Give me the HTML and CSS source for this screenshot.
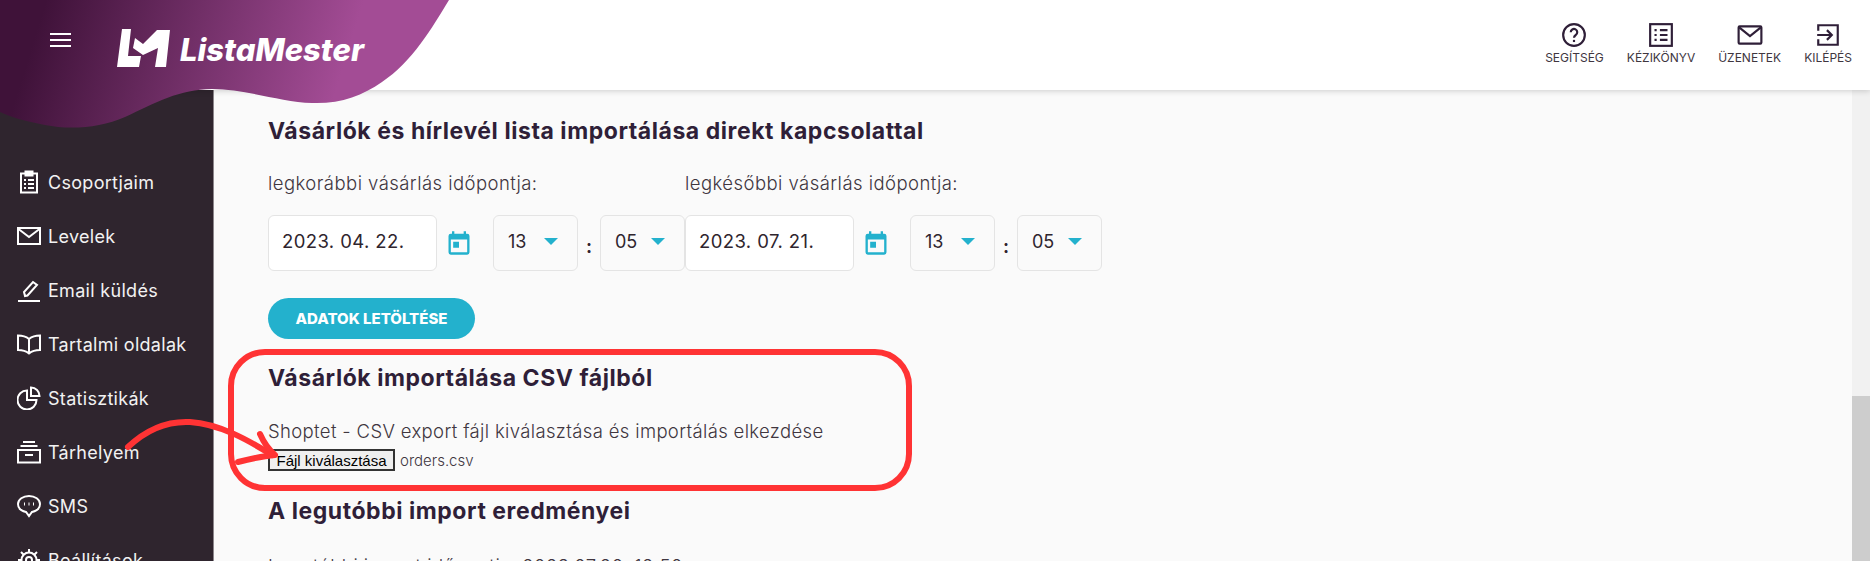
FILE: index.html
```html
<!DOCTYPE html>
<html lang="hu">
<head>
    <meta charset="UTF-8">
    <meta name="viewport" content="width=device-width, initial-scale=1.0">
    <title>ListaMester</title>
    <link rel="stylesheet" href="styles.css">
</head>
<body>

    <!-- Felső sáv -->
    <header class="topbar">
        <nav class="top-links">
            <a class="top-link">
                <svg width="26" height="26" viewBox="0 0 24 24" class="top-icon"><circle cx="12" cy="12" r="10"/><path d="M9 9.5a3 3 0 1 1 4.6 2.5c-1 .7-1.6 1.2-1.6 2.5"/><path d="M12 16.5v2"/></svg>
                <span>SEGÍTSÉG</span>
            </a>
            <a class="top-link">
                <svg width="26" height="26" viewBox="0 0 24 24" class="top-icon"><rect x="2" y="2" width="20" height="20"/><path d="M6 7.5h2M11 7.5h7M6 12h2M11 12h7M6 16.5h2M11 16.5h7"/></svg>
                <span>KÉZIKÖNYV</span>
            </a>
            <a class="top-link">
                <svg width="26" height="26" viewBox="0 0 24 24" class="top-icon"><rect x="1.5" y="4" width="21" height="16" rx="1"/><path d="M2 5l10 8 10-8"/></svg>
                <span>ÜZENETEK</span>
            </a>
            <a class="top-link">
                <svg width="26" height="26" viewBox="0 0 24 24" class="top-icon"><path d="M3 8V3h18v18H3v-5"/><path d="M2 12h13M11 7.5l4.5 4.5-4.5 4.5"/></svg>
                <span>KILÉPÉS</span>
            </a>
        </nav>
    </header>

    <div class="layout">
        <!-- Oldalsó menü -->
        <aside class="sidebar">
            <a class="side-item">
                <svg width="24" height="24" viewBox="0 0 24 24" class="side-icon"><rect x="4" y="3.5" width="16" height="19"/><rect x="8.5" y="1.5" width="7" height="4" fill="#fff"/><path d="M7 10h2M11 10h6M7 14h2M11 14h6M7 18h2M11 18h6"/></svg>
                <span>Csoportjaim</span>
            </a>
            <a class="side-item">
                <svg width="24" height="24" viewBox="0 0 24 24" class="side-icon"><rect x="1" y="4" width="22" height="16"/><path d="M1.5 5L12 13l10.5-8"/></svg>
                <span>Levelek</span>
            </a>
            <a class="side-item">
                <svg width="24" height="24" viewBox="0 0 24 24" class="side-icon"><path d="M1 23h22"/><path d="M8 18l-1-4L16 4l4 3-9.5 10.5z"/></svg>
                <span>Email küldés</span>
            </a>
            <a class="side-item">
                <svg width="24" height="24" viewBox="0 0 24 24" class="side-icon"><path d="M12 7C9 4.5 5 3.5 1 3.5V18c4 0 8 1 11 3.5 3-2.5 7-3.5 11-3.5V3.5C19 3.5 15 4.5 12 7zM12 7v14"/></svg>
                <span>Tartalmi oldalak</span>
            </a>
            <a class="side-item">
                <svg width="24" height="24" viewBox="0 0 24 24" class="side-icon"><path d="M10 4.5a9.5 9.5 0 1 0 9.5 9.5H10z"/><path d="M14 1.5V10h8.5A8.5 8.5 0 0 0 14 1.5z"/></svg>
                <span>Statisztikák</span>
            </a>
            <a class="side-item">
                <svg width="24" height="24" viewBox="0 0 24 24" class="side-icon"><path d="M6 2h12M3.5 6h17"/><rect x="1" y="10" width="22" height="12.5"/><path d="M8 15h8"/></svg>
                <span>Tárhelyem</span>
            </a>
            <a class="side-item">
                <svg width="24" height="24" viewBox="0 0 24 24" class="side-icon"><path d="M12 2C6 2 1 5.5 1 10s3.5 7 8 8l3 4 3-4c4.5-1 8-3.5 8-8s-5-8-11-8z"/><path d="M7 10h1M11.5 10h1M16 10h1" stroke-width="3"/></svg>
                <span>SMS</span>
            </a>
            <a class="side-item">
                <svg width="24" height="24" viewBox="0 0 24 24" class="side-icon"><circle cx="12" cy="12" r="7.5"/><circle cx="12" cy="12" r="3"/><path d="M12 1v3M12 20v3M1 12h3M20 12h3M4 4l2.5 2.5M17.5 17.5L20 20M20 4l-2.5 2.5M6.5 17.5L4 20"/></svg>
                <span>Beállítások</span>
            </a>
        </aside>

        <!-- Tartalom -->
        <main class="content">
            <h2 class="section-title first">Vásárlók és hírlevél lista importálása direkt kapcsolattal</h2>

            <div class="date-row">
                <div class="date-group">
                    <p class="date-label">legkorábbi vásárlás időpontja:</p>
                    <div class="date-fields">
                        <div class="date-input">2023. 04. 22.</div>
                        <svg width="28" height="28" viewBox="0 0 24 24" class="cal-icon"><path d="M19 4h-1V2h-2v2H8V2H6v2H5a2 2 0 0 0-2 2v14a2 2 0 0 0 2 2h14a2 2 0 0 0 2-2V6a2 2 0 0 0-2-2zm0 16H5V9h14zM7 11h5v5H7z"/></svg>
                        <div class="time-select"><span>13</span><i class="caret"></i></div>
                        <b class="colon">:</b>
                        <div class="time-select"><span>05</span><i class="caret"></i></div>
                    </div>
                </div>
                <div class="date-group">
                    <p class="date-label">legkésőbbi vásárlás időpontja:</p>
                    <div class="date-fields">
                        <div class="date-input">2023. 07. 21.</div>
                        <svg width="28" height="28" viewBox="0 0 24 24" class="cal-icon"><path d="M19 4h-1V2h-2v2H8V2H6v2H5a2 2 0 0 0-2 2v14a2 2 0 0 0 2 2h14a2 2 0 0 0 2-2V6a2 2 0 0 0-2-2zm0 16H5V9h14zM7 11h5v5H7z"/></svg>
                        <div class="time-select"><span>13</span><i class="caret"></i></div>
                        <b class="colon">:</b>
                        <div class="time-select"><span>05</span><i class="caret"></i></div>
                    </div>
                </div>
            </div>

            <button class="btn-download">ADATOK LETÖLTÉSE</button>

            <h2 class="section-title csv">Vásárlók importálása CSV fájlból</h2>
            <p class="csv-text">Shoptet - CSV export fájl kiválasztása és importálás elkezdése</p>
            <div class="file-row">
                <button class="file-btn">Fájl kiválasztása</button>
                <span class="file-name">orders.csv</span>
            </div>

            <h2 class="section-title last">A legutóbbi import eredményei</h2>
            <p class="last-text">Legutóbbi import időpontja: 2023.07.20. 12:50</p>
        </main>

        <div class="scrollbar"><div class="scroll-thumb"></div></div>
    </div>

    <!-- Logó a hullám alakú háttéren -->
    <div class="brand">
        <svg class="brand-wave" width="460" height="130" viewBox="0 0 460 130">
            <defs>
                <linearGradient id="waveGrad" x1="40" y1="20" x2="330" y2="110" gradientUnits="userSpaceOnUse">
                    <stop offset="0" stop-color="#3f1239"/>
                    <stop offset="1" stop-color="#a34c95"/>
                </linearGradient>
            </defs>
            <path d="M0 0H449C432 28 412 62 382 82C362 96 340 104 312 103C280 102 245 89 212 89C180 89 155 103 125 117C100 128 70 130 45 125C25 121 10 117 0 112Z" fill="url(#waveGrad)"/>
        </svg>
        <div class="burger"><i></i><i></i><i></i></div>
        <svg class="brand-logo" width="54" height="38" viewBox="0 0 54 38"><path d="M5 0h9l-3 27h13l-2 11H0zM18 9l8 6L40 1h13l-4 37H38l3-19-15 7-10-7z" fill="#fff"/></svg>
        <span class="brand-name">ListaMester</span>
    </div>

    <!-- Piros jelölés a képernyőképen -->
    <svg class="markup" width="1870" height="561" viewBox="0 0 1870 561">
        <rect x="231" y="352" width="678" height="136" rx="34" fill="none" stroke="#ff3334" stroke-width="6"/>
        <path d="M128 447C148 428 170 421 190 422C220 424 248 440 272 455" fill="none" stroke="#ff3334" stroke-width="6" stroke-linecap="round"/>
        <path d="M260 434C264 443 268 449 275 455C263 456 250 459 238 462" fill="none" stroke="#ff3334" stroke-width="6" stroke-linecap="round" stroke-linejoin="round"/>
    </svg>

</body>
</html>
```

FILE: styles.css
```css
* {
    box-sizing: border-box;
}

html, body {
    height: 561px;
    overflow: hidden;
}

body {
    margin: 0;
    font-family: Inter, Arial, sans-serif;
    background-color: #fafafa;
    color: #2f252e;
}

.topbar {
    height: 90px;
    background-color: #fff;
    box-shadow: 0 1px 6px rgba(0, 0, 0, 0.18);
    display: flex;
    justify-content: flex-end;
    position: relative;
    z-index: 2;
}

.top-links {
    display: flex;
    padding-top: 22px;
    padding-right: 18px;
    gap: 23px;
}

.top-link {
    display: flex;
    flex-direction: column;
    align-items: center;
    font-size: 12px;
    line-height: 16px;
    color: #40363f;
}

.top-icon {
    fill: none;
    stroke: #2f1f38;
    stroke-width: 2;
    margin-bottom: 2px;
}

.layout {
    display: flex;
    height: 471px;
}

.sidebar {
    width: 214px;
    background-color: #2f252e;
    border-right: 1px solid #8c868b;
    padding-top: 65px;
    display: flex;
    flex-direction: column;
    flex-shrink: 0;
}

.side-item {
    display: flex;
    align-items: center;
    gap: 7px;
    height: 54px;
    padding-left: 17px;
    color: #f2f2f2;
    font-size: 18px;
    letter-spacing: 0.3px;
    flex-shrink: 0;
}

.side-icon {
    fill: none;
    stroke: #fff;
    stroke-width: 2;
    flex-shrink: 0;
}

.content {
    flex: 1;
    padding: 24px 0 0 54px;
    overflow: hidden;
}

.section-title {
    margin: 0;
    font-size: 23px;
    line-height: 34px;
    letter-spacing: 0.55px;
    font-weight: 700;
    color: #2f1f38;
    white-space: nowrap;
}

.date-row {
    display: flex;
    margin-top: 23px;
}

.date-group {
    width: 417px;
}

.date-label {
    margin: 0 0 20px;
    font-size: 18.5px;
    line-height: 24px;
    letter-spacing: 0.45px;
    font-weight: 300;
    color: #40363f;
}

.date-fields {
    display: flex;
    align-items: center;
}

.date-input {
    width: 169px;
    height: 56px;
    padding-left: 13px;
    line-height: 51px;
    font-size: 18.5px;
    letter-spacing: 0.4px;
    background-color: #fff;
    border: 1px solid #e4e4e4;
    border-radius: 6px;
}

.cal-icon {
    fill: #23b1cd;
    margin: 0 20px 0 8px;
}

.time-select {
    width: 85px;
    height: 56px;
    padding: 0 19px 4px 14px;
    display: flex;
    align-items: center;
    justify-content: space-between;
    font-size: 18px;
    border: 1px solid #e4e4e4;
    border-radius: 6px;
}

.caret {
    width: 0;
    height: 0;
    margin-top: 1px;
    border-left: 7px solid transparent;
    border-right: 7px solid transparent;
    border-top: 7px solid #23b1cd;
}

.colon {
    width: 22px;
    text-align: center;
    font-size: 18px;
    padding-top: 7px;
}

.btn-download {
    display: block;
    width: 207px;
    height: 41px;
    margin-top: 27px;
    border: none;
    border-radius: 21px;
    background-color: #23b1cd;
    color: #fff;
    font-family: inherit;
    font-size: 15px;
    font-weight: 800;
}

.section-title.csv {
    margin-top: 22px;
}

.csv-text {
    margin: 24px 0 0;
    font-size: 18.5px;
    line-height: 24px;
    letter-spacing: 0.35px;
    font-weight: 300;
    color: #40363f;
}

.file-row {
    display: flex;
    align-items: center;
    gap: 5px;
    height: 22px;
    margin-top: 6px;
}

.file-btn {
    width: 127px;
    height: 22px;
    padding: 0;
    font-family: "Liberation Sans", Arial, sans-serif;
    font-size: 15px;
    color: #000;
    background-color: #efefef;
    border: 2px solid #333;
}

.file-name {
    font-size: 15px;
    font-weight: 300;
    color: #40363f;
}

.section-title.last {
    margin-top: 23px;
}

.last-text {
    margin: 26px 0 0;
    font-size: 18.5px;
    line-height: 24px;
    letter-spacing: 0.45px;
    font-weight: 300;
    color: #40363f;
}

.scrollbar {
    width: 18px;
    background-color: #f1f1f1;
    padding-top: 306px;
    flex-shrink: 0;
}

.scroll-thumb {
    height: 165px;
    background-color: #cdcdcd;
}

.brand {
    position: absolute;
    top: 0;
    left: 0;
    z-index: 3;
}

.brand-wave {
    display: block;
}

.burger {
    position: absolute;
    top: 33px;
    left: 50px;
    display: flex;
    flex-direction: column;
    gap: 4px;
}

.burger i {
    display: block;
    width: 21px;
    height: 2px;
    background-color: #fff;
}

.brand-logo {
    position: absolute;
    top: 29px;
    left: 117px;
}

.brand-name {
    position: absolute;
    top: 29px;
    left: 180px;
    color: #fff;
    font-size: 31px;
    line-height: 42px;
    font-weight: 800;
    font-style: italic;
    white-space: nowrap;
}

.markup {
    position: absolute;
    top: 0;
    left: 0;
    z-index: 4;
    pointer-events: none;
}
```
